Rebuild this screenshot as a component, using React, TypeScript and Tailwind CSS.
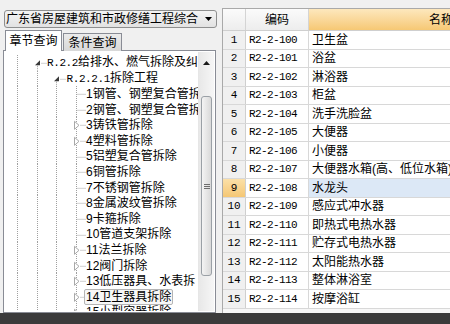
import React from "react";

const SANS = "[font-family:'Liberation_Sans','Noto_Sans_CJK_SC',sans-serif]";
const MONO = "[font-family:'Liberation_Mono','Noto_Sans_CJK_SC',monospace]";
const G = "#a0a0a0";
const RH = 15.6;
const CW = 19.5;
const CX = 9.5;
const CY = 7.8;

type Kind = "open" | "closed" | "leaf";
type Item = { lv: number; kind: Kind; pre?: string; text: string; sel?: boolean };

const tree: Item[] = [
  { lv: 1, kind: "open", pre: "R.2.2", text: "给排水、燃气拆除及纠" },
  { lv: 2, kind: "open", pre: "R.2.2.1", text: "拆除工程" },
  { lv: 3, kind: "leaf", text: "1钢管、钢塑复合管拆" },
  { lv: 3, kind: "leaf", text: "2钢管、钢塑复合管拆" },
  { lv: 3, kind: "closed", text: "3铸铁管拆除" },
  { lv: 3, kind: "closed", text: "4塑料管拆除" },
  { lv: 3, kind: "leaf", text: "5铝塑复合管拆除" },
  { lv: 3, kind: "leaf", text: "6铜管拆除" },
  { lv: 3, kind: "leaf", text: "7不锈钢管拆除" },
  { lv: 3, kind: "leaf", text: "8金属波纹管拆除" },
  { lv: 3, kind: "leaf", text: "9卡箍拆除" },
  { lv: 3, kind: "leaf", text: "10管道支架拆除" },
  { lv: 3, kind: "closed", text: "11法兰拆除" },
  { lv: 3, kind: "closed", text: "12阀门拆除" },
  { lv: 3, kind: "closed", text: "13低压器具、水表拆" },
  { lv: 3, kind: "closed", text: "14卫生器具拆除", sel: true },
  { lv: 3, kind: "closed", text: "15小型容器拆除" },
];

const rows: [string, string, string][] = [
  ["1", "R2-2-100", "卫生盆"],
  ["2", "R2-2-101", "浴盆"],
  ["3", "R2-2-102", "淋浴器"],
  ["4", "R2-2-103", "柜盆"],
  ["5", "R2-2-104", "洗手洗脸盆"],
  ["6", "R2-2-105", "大便器"],
  ["7", "R2-2-106", "小便器"],
  ["8", "R2-2-107", "大便器水箱(高、低位水箱)"],
  ["9", "R2-2-108", "水龙头"],
  ["10", "R2-2-109", "感应式冲水器"],
  ["11", "R2-2-110", "即热式电热水器"],
  ["12", "R2-2-111", "贮存式电热水器"],
  ["13", "R2-2-112", "太阳能热水器"],
  ["14", "R2-2-113", "整体淋浴室"],
  ["15", "R2-2-114", "按摩浴缸"],
];

function Guide() {
  return (
    <svg width={CW} height={RH} className="block shrink-0">
      <line x1={CX} y1={0} x2={CX} y2={RH} stroke={G} strokeDasharray="1 1" />
    </svg>
  );
}

function Expander({ kind }: { kind: Kind }) {
  return (
    <svg width={CW} height={RH} className="block shrink-0">
      {kind === "open" && (
        <>
          <line x1={CX} y1={CY + 3} x2={CX} y2={RH} stroke={G} strokeDasharray="1 1" />
          <line x1={CX + 4} y1={CY + 0.5} x2={CW} y2={CY + 0.5} stroke={G} strokeDasharray="1 1" />
          <polygon
            points={`${CX + 2.5},${CY - 2.5} ${CX + 2.5},${CY + 2.5} ${CX - 2.5},${CY + 2.5}`}
            fill="#3a3a3a"
          />
        </>
      )}
      {kind === "leaf" && (
        <>
          <line x1={CX} y1={0} x2={CX} y2={RH} stroke={G} strokeDasharray="1 1" />
          <line x1={CX + 1} y1={CY + 0.5} x2={CW} y2={CY + 0.5} stroke={G} strokeDasharray="1 1" />
        </>
      )}
      {kind === "closed" && (
        <>
          <line x1={CX} y1={0} x2={CX} y2={RH} stroke={G} strokeDasharray="1 1" />
          <line x1={CX + 4} y1={CY + 0.5} x2={CW} y2={CY + 0.5} stroke={G} strokeDasharray="1 1" />
          <polygon
            points={`${CX - 2},${CY - 3.5} ${CX + 2.5},${CY + 0.5} ${CX - 2},${CY + 4.5}`}
            fill="#ffffff"
            stroke="#a8a8a8"
            strokeWidth={1}
          />
        </>
      )}
    </svg>
  );
}

function TreeRow({ item }: { item: Item }) {
  const guides = [];
  for (let i = 0; i < item.lv; i++) guides.push(<Guide key={i} />);
  return (
    <div className="flex items-center h-[15.6px] shrink-0">
      {guides}
      <Expander kind={item.kind} />
      <span
        className={
          "whitespace-nowrap text-[12px] leading-[14px] text-black " +
          (item.sel ? "border border-[#b4b4b4] rounded-[2px] bg-[#f7f7f7] px-[1px] -ml-[2px]" : "")
        }
      >
        {item.pre && <span className={MONO + " text-[11px] tracking-[-0.4px]"}>{item.pre}</span>}
        {item.text}
      </span>
    </div>
  );
}

function Scrollbar() {
  return (
    <div className="w-[16px] shrink-0 flex flex-col bg-linear-to-r from-[#e8e8e8] to-[#f6f6f6] border-l border-[#e6e6e6]">
      <div className="h-[20px] shrink-0 flex items-center justify-center pt-[2px]">
        <svg width="7" height="4">
          <polygon points="3.5,0 7,4 0,4" fill="#1a1a1a" />
        </svg>
      </div>
      <div className="h-[24px] shrink-0" />
      <div className="h-[180px] mx-[2px] shrink-0 rounded-[3px] border border-[#9aa0a6] bg-linear-to-r from-[#f4f4f4] to-[#d9d9d9] flex flex-col items-center justify-center gap-[1px]">
        <div className="w-[6px] h-[1px] bg-[#6e6e6e]" />
        <div className="w-[6px] h-[1px] bg-[#6e6e6e]" />
        <div className="w-[6px] h-[1px] bg-[#6e6e6e]" />
      </div>
    </div>
  );
}

export default function App() {
  return (
    <div className={"w-[450px] h-[324px] flex flex-col overflow-hidden bg-[#f0f0f0] " + SANS}>
      <div className="flex flex-1 min-h-0">
        {/* Left panel */}
        <div className="w-[218px] shrink-0 flex flex-col pt-[10px] pl-[3px] pr-[2px]">
          <div className="ml-[1px] w-[213px] h-[18px] shrink-0 flex items-center justify-between rounded-[3px] border border-[#8e8f8f] bg-linear-to-b from-[#f4f4f4] to-[#e2e2e2] pl-[1px] pr-[4px]">
            <span className="text-[12px] leading-[16px] whitespace-nowrap text-black">
              广东省房屋建筑和市政修缮工程综合
            </span>
            <svg width="7" height="4">
              <polygon points="0,0 7,0 3.5,4" fill="#000" />
            </svg>
          </div>
          <div className="flex items-end mt-[2px] pl-[2px] shrink-0 relative z-10 -mb-px">
            <div className="w-[57px] h-[21px] border border-b-0 border-[#898c95] bg-white flex items-center justify-center text-[12px] text-black">
              章节查询
            </div>
            <div className="w-[59px] h-[18px] ml-[1px] border border-b-0 border-[#898c95] bg-linear-to-b from-[#ebebeb] to-[#d8d8d8] flex items-center justify-center text-[12px] text-black">
              条件查询
            </div>
          </div>
          <div className="flex-1 min-h-0 flex border border-[#898c95] bg-white p-[1px]">
            <div className="flex-1 min-w-0 overflow-hidden flex flex-col pt-[3px] pl-[3px]">
              {tree.map((it, i) => (
                <TreeRow key={i} item={it} />
              ))}
            </div>
            <Scrollbar />
          </div>
        </div>

        {/* Splitter */}
        <div className="w-[4px] shrink-0 bg-[#f0f0f0]" />

        {/* Right panel */}
        <div className="flex-1 min-w-0 pt-[8px] overflow-hidden">
          <div className="w-[400px] h-full bg-[#f7f7f7] border-l border-t border-[#a9a9a9]">
            <div className="flex h-[22px] border-b border-[#cfcfcf]">
              <div className="w-[23px] shrink-0 border-r border-[#d4d4d4] bg-linear-to-b from-[#fbfbfb] to-[#ededed]" />
              <div className="w-[63px] shrink-0 border-r border-[#d4d4d4] bg-linear-to-b from-[#fbfbfb] to-[#ededed] flex items-center justify-center text-[12px] text-black">
                编码
              </div>
              <div className="w-[264px] shrink-0 bg-linear-to-b from-[#fde8bd] to-[#f6c874] flex items-center justify-center text-[12px] text-black">
                名称
              </div>
            </div>
            {rows.map(([n, code, name]) => {
              const sel = n === "9";
              return (
                <div key={n} className="flex h-[18.5px] border-b border-[#d8d8d8]">
                  <div
                    className={
                      "w-[23px] shrink-0 border-r border-[#cfcfcf] flex items-center justify-center text-[11px] text-black " +
                      MONO +
                      (sel ? " bg-linear-to-b from-[#fbe0a8] to-[#f5c774]" : " bg-[#f0f0f0]")
                    }
                  >
                    {n}
                  </div>
                  <div
                    className={
                      "w-[63px] shrink-0 border-r border-[#d8d8d8] bg-white flex items-center pl-[3px] text-[11px] tracking-[-0.6px] text-black " +
                      MONO
                    }
                  >
                    {code}
                  </div>
                  <div
                    className={
                      "w-[264px] shrink-0 flex items-center pl-[3px] text-[12px] whitespace-nowrap overflow-hidden text-black " +
                      (sel ? "bg-[#dce8f6]" : "bg-white")
                    }
                  >
                    {name}
                  </div>
                </div>
              );
            })}
          </div>
        </div>
      </div>
      <div className="h-[11px] shrink-0 bg-[#3b3b3b]" />
    </div>
  );
}
